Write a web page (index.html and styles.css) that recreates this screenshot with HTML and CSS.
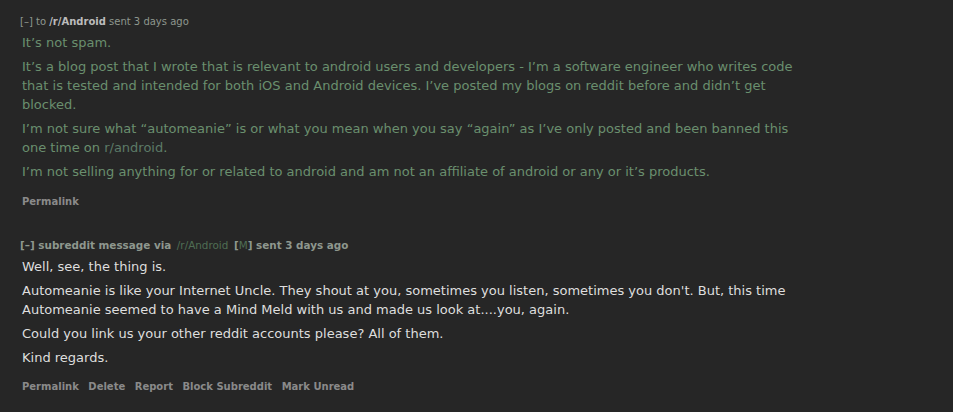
FILE: index.html
```html
<!DOCTYPE html>
<html>
<head>
<meta charset="utf-8">
<link rel="stylesheet" href="styles.css">
</head>
<body>
<div class="inbox">
  <div class="message sent">
    <div class="tagline"><span class="toggle">[–]</span> to <a class="sub strong">/r/Android</a> sent 3 days ago</div>
    <div class="md">
      <p>It’s not spam.</p>
      <p>It’s a blog post that I wrote that is relevant to android users and developers - I’m a software engineer who writes code that is tested and intended for both iOS and Android devices. I’ve posted my blogs on reddit before and didn’t get blocked.</p>
      <p>I’m not sure what “automeanie” is or what you mean when you say “again” as I’ve only posted and been banned this one time on <span class="link">r/android</span>.</p>
      <p>I’m not selling anything for or related to android and am not an affiliate of android or any or it’s products.</p>
    </div>
    <ul class="buttons"><li>Permalink</li></ul>
  </div>
  <div class="message received">
    <div class="tagline bold"><span class="toggle">[–]</span> subreddit message via <a class="sub">/r/Android</a> <span class="mod">[<span class="m">M</span>]</span> sent 3 days ago</div>
    <div class="md">
      <p>Well, see, the thing is.</p>
      <p>Automeanie is like your Internet Uncle. They shout at you, sometimes you listen, sometimes you don't. But, this time Automeanie seemed to have a Mind Meld with us and made us look at....you, again.</p>
      <p>Could you link us your other reddit accounts please? All of them.</p>
      <p>Kind regards.</p>
    </div>
    <ul class="buttons"><li>Permalink</li><li>Delete</li><li>Report</li><li>Block Subreddit</li><li>Mark Unread</li></ul>
  </div>
</div>
</body>
</html>
```
FILE: styles.css
```css
html, body {
  margin: 0;
  padding: 0;
  background: #262626;
}
body {
  font-family: "DejaVu Sans", Verdana, sans-serif;
}
.inbox {
  padding: 14px 0 0 22px;
  width: 780px;
}
.message {
  margin-bottom: 29px;
}
.tagline {
  font-size: 10px;
  line-height: 15px;
  color: #8e978e;
  margin-left: -2px;
  margin-bottom: 4px;
  white-space: nowrap;
}
.tagline.bold {
  font-size: 10.4px;
  font-weight: bold;
}
.tagline .sub.strong {
  color: #bcbcbc;
  font-weight: bold;
}
.received .tagline .sub {
  color: #4f6e54;
  font-weight: normal;
  margin: 0 2px;
}
.received .tagline .mod .m {
  color: #4f6e54;
  font-weight: normal;
}
.md {
  font-size: 13px;
  line-height: 19px;
}
.md p {
  margin: 0 0 5px;
}
.sent .md {
  color: #6a8f6e;
}
.sent .md .link {
  color: #5c7a67;
}
.received .md {
  color: #dedede;
}
.buttons {
  list-style: none;
  margin: 14px 0 0;
  padding: 0;
  display: flex;
  gap: 9.5px;
  font-size: 10px;
  line-height: 14px;
  font-weight: bold;
  color: #8a8a8a;
}
.received .buttons {
  margin-top: 13px;
}
```
